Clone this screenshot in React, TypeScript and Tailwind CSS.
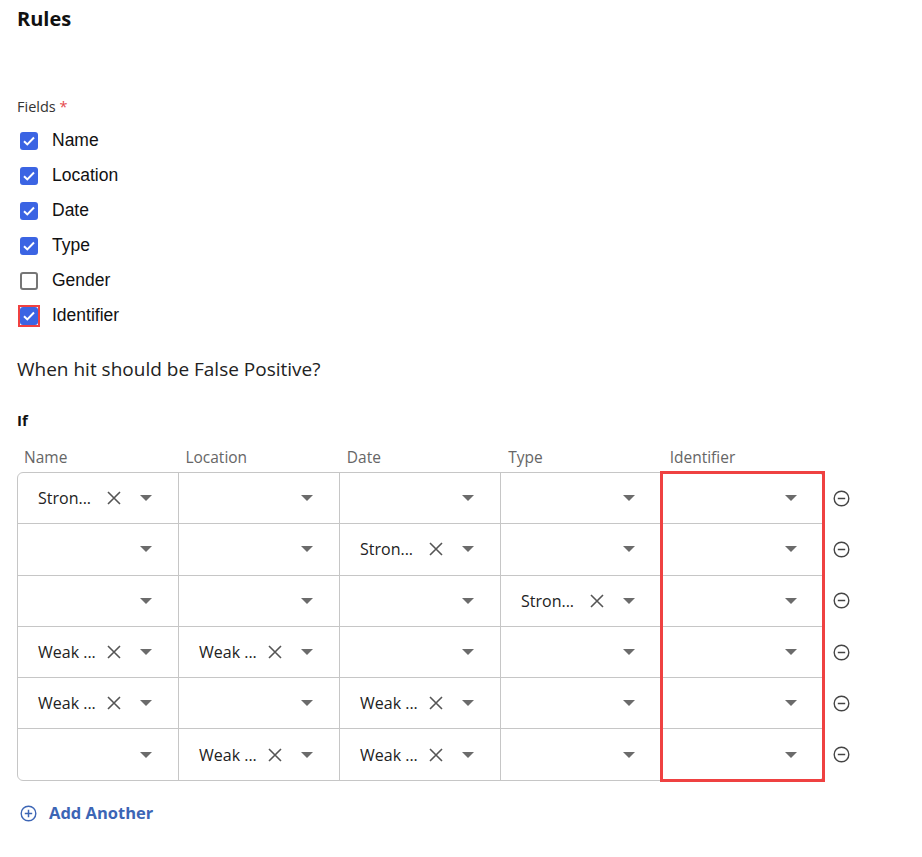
import { Fragment } from "react";

type Cell = string | null;

const columns = ["Name", "Location", "Date", "Type", "Identifier"];

const rows: Cell[][] = [
  ["Stron...", null, null, null, null],
  [null, null, "Stron...", null, null],
  [null, null, null, "Stron...", null],
  ["Weak ...", "Weak ...", null, null, null],
  ["Weak ...", null, "Weak ...", null, null],
  [null, "Weak ...", "Weak ...", null, null],
];

const fields = [
  { label: "Name", checked: true },
  { label: "Location", checked: true },
  { label: "Date", checked: true },
  { label: "Type", checked: true },
  { label: "Gender", checked: false },
  { label: "Identifier", checked: true, flagged: true },
];

function Caret() {
  return (
    <svg width="12" height="6" viewBox="0 0 12 6" className="shrink-0">
      <path d="M0 0h12L6 6z" fill="#6b6b6b" />
    </svg>
  );
}

function ClearIcon() {
  return (
    <svg width="14" height="14" viewBox="0 0 14 14" className="shrink-0">
      <path d="M1 1l12 12M13 1L1 13" stroke="#555" strokeWidth="1.6" />
    </svg>
  );
}

function Checkbox({ checked }: { checked: boolean }) {
  if (!checked) {
    return <span className="block w-[18px] h-[18px] rounded-[3px] border-2 border-[#767676] bg-white" />;
  }
  return (
    <span className="flex w-[18px] h-[18px] items-center justify-center rounded-[3px] bg-[#3b64e3]">
      <svg width="12" height="10" viewBox="0 0 12 10">
        <path d="M1 5.2l3.3 3.2L11 1.5" stroke="#fff" strokeWidth="2" fill="none" />
      </svg>
    </span>
  );
}

function SelectCell({ value, last }: { value: Cell; last: boolean }) {
  return (
    <div
      className={`flex h-[50.3px] items-center pl-[20px] pr-[26px] ${last ? "" : "border-r border-[#c6c6c6]"}`}
    >
      {value && <span className="text-[16px] text-[#222]">{value}</span>}
      <div className="ml-auto flex items-center gap-[19px]">
        {value && <ClearIcon />}
        <Caret />
      </div>
    </div>
  );
}

export default function App() {
  return (
    <main className="min-h-screen bg-white px-[17px] pt-[5px] font-['Open_Sans',sans-serif] text-[#1d1d1d]">
      <h1 className="text-[20px] font-bold leading-[28px] text-[#111]">Rules</h1>

      <div className="mt-[64px] text-[14.5px] leading-[20px] text-[#333]">
        Fields <span className="text-[#e5484d]">*</span>
      </div>

      <div className="mt-[6px] flex flex-col">
        {fields.map((f) => (
          <label key={f.label} className="flex h-[35px] items-center gap-[14px] pl-[3px]">
            <span
              className={`flex w-[18px] h-[18px] items-center justify-center ${
                f.flagged ? "outline-2 outline-[#f04141]" : ""
              }`}
            >
              <Checkbox checked={f.checked} />
            </span>
            <span className="font-['Liberation_Sans',Arial,sans-serif] text-[17.5px] text-[#111]">
              {f.label}
            </span>
          </label>
        ))}
      </div>

      <p className="mt-[24px] text-[19px] leading-[24px] text-[#222]">When hit should be False Positive?</p>

      <div className="mt-[29px] text-[15px] font-bold leading-[20px] text-[#111]">If</div>

      <div className="mt-[17px] flex w-[807px]">
        {columns.map((c) => (
          <div key={c} className="flex-1 pl-[7px] text-[15.5px] leading-[20px] text-[#666]">
            {c}
          </div>
        ))}
      </div>

      <div className="mt-[5px] flex items-start">
        <div className="relative w-[807px]">
          <div className="overflow-hidden rounded-[6px] border border-[#c6c6c6]">
            {rows.map((r, i) => (
              <div
                key={i}
                className={`grid grid-cols-5 ${i > 0 ? "border-t border-[#c6c6c6]" : ""}`}
              >
                {r.map((v, j) => (
                  <Fragment key={j}>
                    <SelectCell value={v} last={j === 4} />
                  </Fragment>
                ))}
              </div>
            ))}
          </div>
          <div className="pointer-events-none absolute top-[-1px] bottom-[-1px] left-[643px] right-[-1px] border-[3px] border-[#ef4141]" />
        </div>

        <div className="ml-[9px] flex flex-col pt-[1px]">
          {rows.map((_, i) => (
            <div key={i} className={`flex h-[50.3px] items-center ${i > 0 ? "mt-px" : ""}`}>
              <svg width="17" height="17" viewBox="0 0 17 17">
                <circle cx="8.5" cy="8.5" r="7.3" stroke="#444" strokeWidth="1.4" fill="none" />
                <path d="M4.8 8.5h7.4" stroke="#444" strokeWidth="1.5" />
              </svg>
            </div>
          ))}
        </div>
      </div>

      <button className="mt-[20px] flex items-center gap-[12px] pl-[3px] text-[16.5px] font-bold text-[#3c65b5]">
        <svg width="17" height="17" viewBox="0 0 17 17">
          <circle cx="8.5" cy="8.5" r="7.3" stroke="#3c65b5" strokeWidth="1.4" fill="none" />
          <path d="M4.8 8.5h7.4M8.5 4.8v7.4" stroke="#3c65b5" strokeWidth="1.5" />
        </svg>
        Add Another
      </button>
    </main>
  );
}
